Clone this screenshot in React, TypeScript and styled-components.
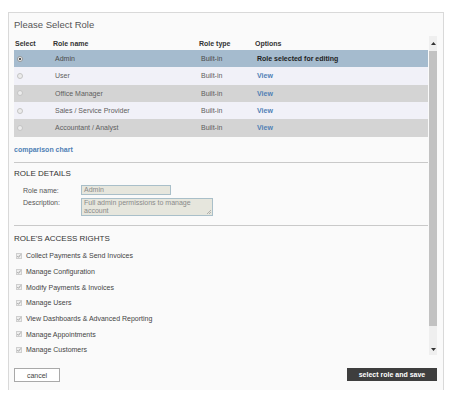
import React from "react";
import styled, { createGlobalStyle } from "styled-components";

const Global = createGlobalStyle`
  html, body { margin: 0; padding: 0; background: #ffffff; }
  body { font-family: "Liberation Sans", Arial, sans-serif; }
  * { box-sizing: border-box; }
`;

const Dialog = styled.div`
  width: 436px;
  height: 378px;
  margin: 12px 0 0 8px;
  border: 1px solid #d9d9d9;
  border-bottom: none;
  background: #fafafa;
  padding: 0 6px 0 5px;
  display: flex;
  flex-direction: column;
`;

const Title = styled.div`
  height: 23px;
  display: flex;
  align-items: center;
  padding-bottom: 1px;
  font-size: 9.5px;
  color: #555;
`;

const ScrollArea = styled.div`
  height: 319px;
  display: flex;
  gap: 1px;
`;

const Content = styled.div`
  flex: 1;
  overflow: hidden;
  display: flex;
  flex-direction: column;
`;

const cols = "38px 146px 56px 1fr";

const HeaderRow = styled.div`
  height: 14px;
  flex: none;
  display: grid;
  grid-template-columns: ${cols};
  align-items: center;
  font-size: 7px;
  font-weight: bold;
  color: #333;
  padding-left: 1px;
`;

const Row = styled.div<{ $tone: "sel" | "light" | "dark" }>`
  height: 17.33px;
  flex: none;
  display: grid;
  grid-template-columns: ${cols};
  align-items: center;
  font-size: 7px;
  color: ${(p) => (p.$tone === "sel" ? "#4a4a4a" : "#5e5e5e")};
  background: ${(p) =>
    p.$tone === "sel" ? "#a5bbce" : p.$tone === "light" ? "#f1f1f8" : "#d4d4d4"};
`;

const Cell = styled.div`
  padding-left: 3px;
  white-space: nowrap;
`;

const Radio = styled.span<{ $on?: boolean }>`
  display: block;
  width: 6px;
  height: 6px;
  margin-left: 3px;
  border-radius: 50%;
  border: 1px solid ${(p) => (p.$on ? "#9a9a9a" : "#c4c4c4")};
  background: ${(p) =>
    p.$on ? "radial-gradient(circle, #555 0 1.2px, #f4f4f4 1.6px)" : "#ececec"};
`;

const Strong = styled.span`
  font-weight: bold;
  color: #222;
`;

const LinkText = styled.a`
  font-weight: bold;
  color: #4f7fb5;
  text-decoration: none;
  font-size: 7px;
`;

const LinkBlock = styled.div`
  height: 25px;
  flex: none;
  display: flex;
  align-items: center;
  padding-top: 1px;
`;

const Section = styled.div<{ $pb: number }>`
  flex: none;
  border-top: 1px solid #c9c9c9;
  padding-bottom: ${(p) => p.$pb}px;
`;

const SectionHead = styled.div<{ $h: number; $pt: number }>`
  height: ${(p) => p.$h}px;
  padding-top: ${(p) => p.$pt}px;
  display: flex;
  align-items: center;
  font-size: 8px;
  color: #333;
`;

const FieldRow = styled.div<{ $h: number }>`
  display: flex;
  align-items: flex-start;
  min-height: ${(p) => p.$h}px;
  padding-left: 9px;
  font-size: 7px;
  color: #555;
`;

const Label = styled.div<{ $mt?: number }>`
  width: 58px;
  line-height: 9px;
  margin-top: ${(p) => p.$mt ?? 0}px;
`;

const Input = styled.div`
  width: 90px;
  height: 10px;
  margin-top: 1px;
  border: 1px solid #a9bfc9;
  background: #e6e6dd;
  color: #8a8a8a;
  font-size: 7px;
  line-height: 8px;
  padding-left: 2px;
`;

const TextArea = styled.div`
  position: relative;
  width: 132px;
  height: 18px;
  border: 1px solid #a9bfc9;
  background: #e6e6dd;
  color: #8a8a8a;
  font-size: 7px;
  line-height: 8px;
  padding: 0 2px;
`;

const Grip = styled.svg`
  position: absolute;
  right: 1px;
  bottom: 1px;
`;

const CheckRow = styled.div`
  height: 15.65px;
  flex: none;
  display: flex;
  align-items: center;
  gap: 4px;
  padding-left: 2px;
  font-size: 7px;
  color: #444;
`;

const Scrollbar = styled.div`
  width: 8px;
  flex: none;
  background: #efefef;
  display: flex;
  flex-direction: column;
  align-items: center;
`;

const ArrowBox = styled.div<{ $h: number }>`
  height: ${(p) => p.$h}px;
  width: 100%;
  display: flex;
  align-items: center;
  justify-content: center;
`;

const Thumb = styled.div`
  width: 8px;
  height: 275px;
  margin-top: 1px;
  background: #c2c2c2;
`;

const Spacer = styled.div`
  flex: 1;
`;

const Footer = styled.div`
  flex: 1;
  display: flex;
  justify-content: space-between;
  align-items: flex-start;
  padding-top: 13px;
`;

const CancelButton = styled.button`
  width: 46px;
  height: 14px;
  padding: 0;
  border: 1px solid #a9a9a9;
  background: #fff;
  color: #444;
  font-family: "Liberation Sans", Arial, sans-serif;
  font-size: 7px;
`;

const SaveButton = styled.button`
  width: 90px;
  height: 13px;
  padding: 0;
  border: none;
  background: #3e3e3e;
  color: #fff;
  font-family: "Liberation Sans", Arial, sans-serif;
  font-weight: bold;
  font-size: 7px;
`;

const CheckIcon = () => (
  <svg width="6" height="6" viewBox="0 0 6 6">
    <rect x="0.5" y="0.5" width="5" height="5" fill="#eeeeee" stroke="#cfcfcf" />
    <path d="M1.3 3.1 L2.5 4.3 L4.8 1.4" fill="none" stroke="#9a9a9a" strokeWidth="0.9" />
  </svg>
);

const roles = [
  { name: "Admin", tone: "sel" as const },
  { name: "User", tone: "light" as const },
  { name: "Office Manager", tone: "dark" as const },
  { name: "Sales / Service Provider", tone: "light" as const },
  { name: "Accountant / Analyst", tone: "dark" as const },
];

const rights = [
  "Collect Payments & Send Invoices",
  "Manage Configuration",
  "Modify Payments & Invoices",
  "Manage Users",
  "View Dashboards & Advanced Reporting",
  "Manage Appointments",
  "Manage Customers",
];

export default function App() {
  return (
    <>
      <Global />
      <Dialog>
        <Title>Please Select Role</Title>
        <ScrollArea>
          <Content>
            <HeaderRow>
              <div>Select</div>
              <div>Role name</div>
              <div>Role type</div>
              <div>Options</div>
            </HeaderRow>
            {roles.map((r) => (
              <Row key={r.name} $tone={r.tone}>
                <div>
                  <Radio $on={r.tone === "sel"} />
                </div>
                <Cell>{r.name}</Cell>
                <Cell>Built-in</Cell>
                <Cell>
                  {r.tone === "sel" ? (
                    <Strong>Role selected for editing</Strong>
                  ) : (
                    <LinkText href="#">View</LinkText>
                  )}
                </Cell>
              </Row>
            ))}
            <LinkBlock>
              <LinkText href="#">comparison chart</LinkText>
            </LinkBlock>
            <Section $pb={9}>
              <SectionHead $h={21} $pt={0}>ROLE DETAILS</SectionHead>
              <FieldRow $h={14}>
                <Label $mt={2}>Role name:</Label>
                <Input>Admin</Input>
              </FieldRow>
              <FieldRow $h={18}>
                <Label>Description:</Label>
                <TextArea>
                  Full admin permissions to manage account
                  <Grip width="5" height="5" viewBox="0 0 5 5">
                    <path d="M1 5 L5 1 M3 5 L5 3" stroke="#999" strokeWidth="0.7" />
                  </Grip>
                </TextArea>
              </FieldRow>
            </Section>
            <Section $pb={0}>
              <SectionHead $h={22.5} $pt={3}>ROLE'S ACCESS RIGHTS</SectionHead>
              {rights.map((t) => (
                <CheckRow key={t}>
                  <CheckIcon />
                  <span>{t}</span>
                </CheckRow>
              ))}
            </Section>
          </Content>
          <Scrollbar>
            <ArrowBox $h={14}>
              <svg width="5" height="3" viewBox="0 0 5 3">
                <path d="M0 3 L2.5 0 L5 3 Z" fill="#333" />
              </svg>
            </ArrowBox>
            <Thumb />
            <Spacer />
            <ArrowBox $h={12}>
              <svg width="5" height="3" viewBox="0 0 5 3">
                <path d="M0 0 L5 0 L2.5 3 Z" fill="#333" />
              </svg>
            </ArrowBox>
          </Scrollbar>
        </ScrollArea>
        <Footer>
          <CancelButton>cancel</CancelButton>
          <SaveButton>select role and save</SaveButton>
        </Footer>
      </Dialog>
    </>
  );
}
